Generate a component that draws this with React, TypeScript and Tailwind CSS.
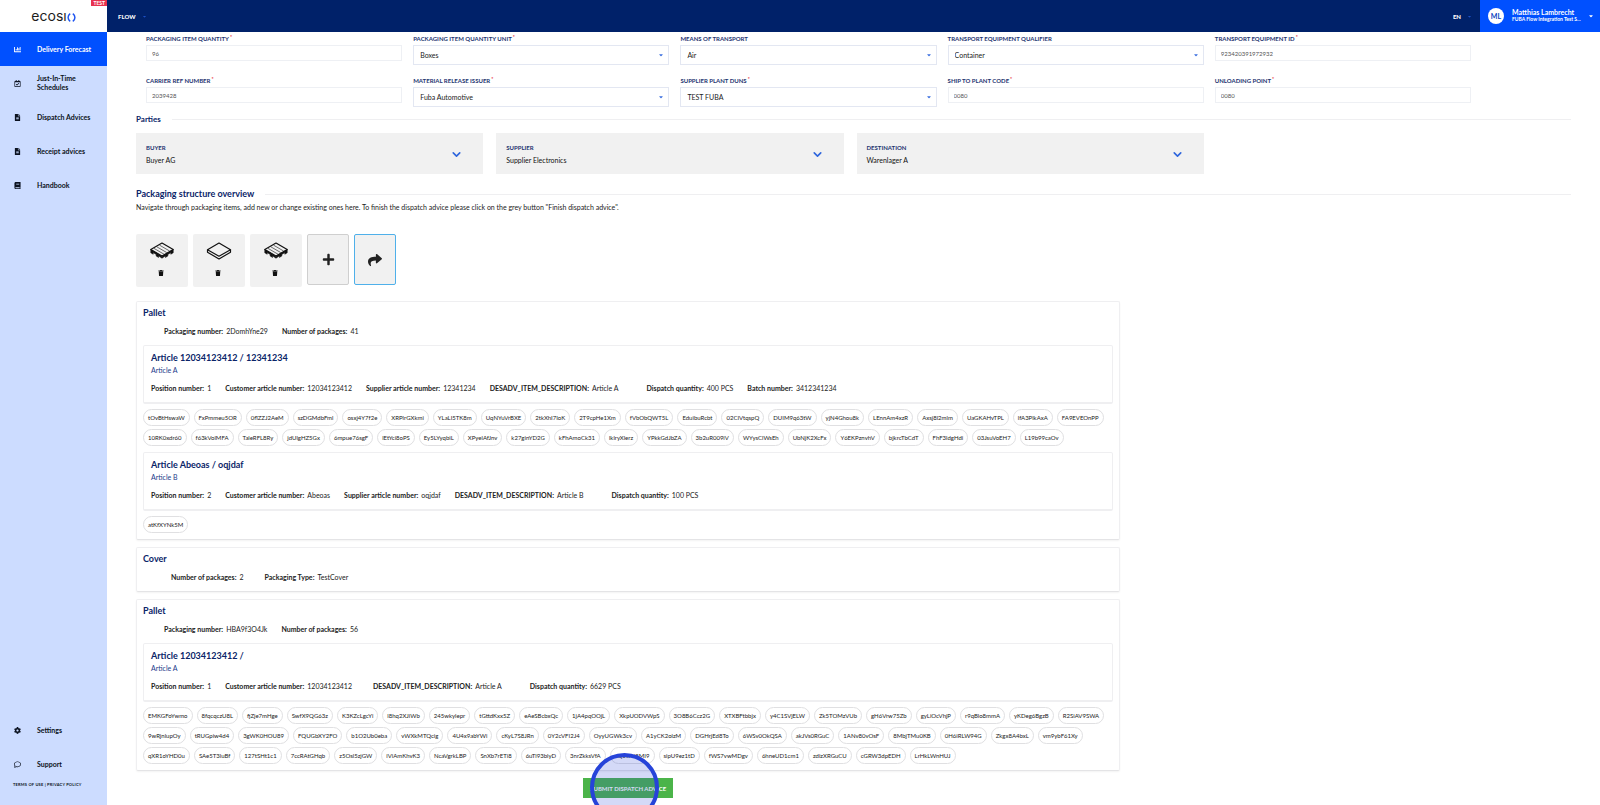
import React from 'react';
import {
  FaBook,
  FaCaretDown,
  FaChartBar,
  FaCog,
  FaFileAlt,
  FaPlus,
  FaRegCalendarCheck,
  FaRegComment,
  FaShare,
  FaTrash,
} from 'react-icons/fa';
import { ChevronDown } from 'lucide-react';

const navItems = [
  { label: 'Delivery Forecast', icon: FaChartBar, active: true },
  { label: 'Just-In-Time Schedules', icon: FaRegCalendarCheck },
  { label: 'Dispatch Advices', icon: FaFileAlt },
  { label: 'Receipt advices', icon: FaFileAlt },
  { label: 'Handbook', icon: FaBook },
];

const footerItems = [
  { label: 'Settings', icon: FaCog },
  { label: 'Support', icon: FaRegComment },
];

type Field = { id: string; label: string; value: string; required?: boolean; select?: boolean };

const fields: Field[] = [
  { id: 'item-quantity', label: 'Packaging item quantity', value: '96', required: true },
  { id: 'item-quantity-unit', label: 'Packaging item quantity unit', value: 'Boxes', required: true, select: true },
  { id: 'means-of-transport', label: 'Means of transport', value: 'Air', select: true },
  { id: 'equipment-qualifier', label: 'Transport equipment qualifier', value: 'Container', select: true },
  { id: 'equipment-id', label: 'Transport equipment ID', value: '923420391972932', required: true },
  { id: 'carrier-ref', label: 'Carrier ref number', value: '2039428', required: true },
  { id: 'release-issuer', label: 'Material release issuer', value: 'Fuba Automotive', required: true, select: true },
  { id: 'plant-duns', label: 'Supplier plant DUNS', value: 'TEST FUBA', required: true, select: true },
  { id: 'ship-to', label: 'Ship to plant code', value: '0080', required: true },
  { id: 'unloading-point', label: 'Unloading point', value: '0080', required: true },
];

const parties = [
  { role: 'Buyer', name: 'Buyer AG' },
  { role: 'Supplier', name: 'Supplier Electronics' },
  { role: 'Destination', name: 'Warenlager A' },
];

const serialsA =
  'tOvBtHswaW FxPmmeu5OR 0flZZJ2AeM szDGMdbFml osxj4Y7f2e XRPlrGXkmi YLaLI5TK8m UqNYuVrBXE 2tkXhI7IoK 2T9cpHe1Xm fVbObQWT5L EduibuRcbt 02CIVtqspQ DUIM9q63tW yjN4Ghou8k LEnnAm4xzR Axsj8l2mlm UaGKAHvTPL lfA3PlkAxA FA9EVEOnPP 10RK0xdr60 f63kVolMFA TaleRFL8Ry jdUlgHZ5Gx 6mpue76sgF lEtYci8oPS Ey5LYyqbiL XPyelAfJnv k27ginYD2G kFhAmoCk31 lklryXlerz YPkkGdJbZA 3b2uR009iV WYysClWsEh UbNjK2XcFx Y6EKPznvhV bjkrcTbCdT FhF3ldgHdi 03JsuVoEH7 L19b99caOv'.split(' ');

const serialsC =
  'EMKGFoYwmo 8fqcqczU8L fjZje7mHge SwfX9QG63z K3KZcLgcYi l8hq2XJiWb 245wkylepr tGttdKxx5Z eAeSBcbxQc 1jA4pqOOjL XkpUODVWpS 3O8B6Ccz2G XTXBFtbbjx y4C1SVjELW Zk5TOMzVUb gH6Vrw75Zb gyLiOcVhjP r9qBlo8mmA yKDeg6BgzB R2SiAV9SWA 9wRjnlupOy tRUGpiw4d4 3gWK0HOU89 FQUGbXY2FO b1O2Ub0eba vWXkMTQcig 4U4x9abYWi cKyL7S8JRn 0Y2cVFI2J4 OyyUGWk3cv A1yCK2olzM DGHrjEd8To 6WSv0OkQSA akJVs0RGuC 1ANv80vOsF 8MbjTMu0KB 0H6iRLW94G Zkgx8A4bxL vm9ybF61Xy qXR1oYHD0u SAe5T3luBf 127tSHt1c1 7ccRAtGHqb z5Osl5zjGW iViAmKhvK3 NcaVgrkLBP SnXb7rETi8 6uTl93blyD 3nrZkksVfA xQ3wni8MI9 sipU9ez1tD fWS7vwMDgv 6hneUD1cm1 zdizXRGuCU cGRW3dpEDH LrHkLWnHUJ'.split(' ');

const NavLink = ({ label, icon: Icon, active }: { label: string; icon: React.ElementType; active?: boolean }) => (
  <a
    href="#"
    className={`flex h-[34px] items-center pl-[14px] text-[7px] leading-[9px] font-bold ${
      active ? 'bg-[#0050ff] text-white' : 'text-[#0b1220]'
    }`}
  >
    <Icon size={7} className="shrink-0" />
    <span className="ml-4 w-[60px]">{label}</span>
  </a>
);

const Logo = () => (
  <a href="#" aria-label="ecosio" className="flex items-center text-[#1c1c1c]">
    <span className="font-[Inter] text-[14px] leading-4">ecosı</span>
    <svg width="9" height="9" viewBox="0 0 9 9" fill="none" stroke="#1f55f0" strokeWidth="1.5" className="mt-[2px]">
      <path d="M3.2 .7C.4 2.6 .4 6.4 3.2 8.3" />
      <path d="M5.8 .7C8.6 2.6 8.6 6.4 5.8 8.3" />
    </svg>
  </a>
);

const FormField = ({ id, label, value, required, select }: Field) => (
  <div>
    <label htmlFor={id} className="block h-[10px] text-[6px] leading-[7px] font-bold text-[#1d3470] uppercase">
      {label}
      {required && <span className="ml-px align-top text-[5px] leading-[5px] text-[#e8343f]">*</span>}
    </label>
    {select ? (
      <div className="relative">
        <select
          id={id}
          defaultValue={value}
          className="block h-5 w-full appearance-none border border-[#e3e7f2] bg-white pl-[6px] text-[7px] leading-[10px] text-[#222]"
        >
          <option>{value}</option>
        </select>
        <FaCaretDown size={6} className="pointer-events-none absolute top-[7px] right-[5px] text-[#3b6fe0]" />
      </div>
    ) : (
      <input
        id={id}
        defaultValue={value}
        className="block h-4 w-full border border-[#eef0f4] bg-white pl-[5px] text-[6px] leading-[8px] text-[#555]"
      />
    )}
  </div>
);

const SectionTitle = ({ children, large }: { children: React.ReactNode; large?: boolean }) => (
  <div className="flex items-center gap-[11px]">
    <h2 className={`font-bold text-[#0a2468] ${large ? 'text-[9px] leading-3' : 'text-[8px] leading-3'}`}>{children}</h2>
    <div className="h-px flex-1 bg-[#efeff1]" />
  </div>
);

const PalletIcon = () => (
  <svg width="26" height="20" viewBox="0 0 26 20" fill="none" stroke="#111" strokeWidth="1.2" strokeLinejoin="round">
    <path d="M13 2 24.2 8.6 13 15 1.8 8.6Z" />
    <path d="M5 7.4 15 13.2M7.8 5.8 17.8 11.6M10.6 4.2 20.6 10" strokeWidth=".6" />
    <path d="M1.8 8.6v3.2l2.4 1.4v-1.6l3 1.8v1.6l2.4 1.4v-1.6L13 17.2l3.4-2.4v1.6l2.4-1.4v-1.6l3-1.8v1.6l2.4-1.4V8.6L13 15.4Z" fill="#111" strokeWidth=".6" />
  </svg>
);

const CoverIcon = () => (
  <svg width="26" height="20" viewBox="0 0 26 20" fill="none" stroke="#111" strokeWidth="1.2" strokeLinejoin="round">
    <path d="M13 2 24.5 8.8 13 15.2 1.5 8.8Z" />
    <path d="M1.5 8.8v2.4L13 18l11.5-6.8V8.8" />
  </svg>
);

const PackagingTile = ({ children, name }: { children: React.ReactNode; name: string }) => (
  <div className="flex h-[53px] w-[52px] flex-col items-center rounded-xs bg-[#f1f1f1] pt-[7px]">
    {children}
    <button aria-label={`Delete ${name}`} className="mt-[9px] mr-[2px]">
      <FaTrash size={6} className="text-[#111]" />
    </button>
  </div>
);

// Entries are [label, value, extra class for the gap before the entry]
type Meta = [string, string, string?];

const MetaRow = ({ items, className = '' }: { items: Meta[]; className?: string }) => (
  <dl className={`flex text-[7px] leading-[10px] text-[#222] ${className}`}>
    {items.map(([label, value, gap]) => (
      <div key={label} className={`flex gap-[3px] ${gap ?? 'ml-[14px]'}`}>
        <dt className="font-bold">{label}:</dt>
        <dd>{value}</dd>
      </div>
    ))}
  </dl>
);

const PackageCard = ({ title, children }: { title: string; children: React.ReactNode }) => (
  <section className="mb-[7px] rounded-xs border border-[#efeff1] border-b-[#e4e4e6] px-[6px] pt-[5px] pb-[6px] shadow-xs">
    <h3 className="text-[9px] leading-3 font-bold text-[#0a2468]">{title}</h3>
    {children}
  </section>
);

const ArticleBox = ({ title, subtitle, meta }: { title: string; subtitle: string; meta: Meta[] }) => (
  <article className="rounded-xs border border-b-2 border-[#efeff1] px-[7px] pt-[5px] pb-[9px]">
    <h4 className="text-[9px] leading-[14px] font-bold text-[#0a2468]">{title}</h4>
    <p className="text-[7px] leading-[10px] text-[#1d3a8a]">{subtitle}</p>
    <MetaRow items={meta} className="mt-2" />
  </article>
);

const Chips = ({ items }: { items: string[] }) => (
  <ul className="mt-[5px] flex flex-wrap gap-x-1 gap-y-[3px]">
    {items.map((serial) => (
      <li key={serial} className="h-[17px] rounded-full border border-[#e0e0e2] px-1 text-[6px] leading-[15px] text-[#222]">
        {serial}
      </li>
    ))}
  </ul>
);

export default function App() {
  return (
    <div className="flex h-screen overflow-hidden bg-white font-[Lato,sans-serif] text-[#222]">
      <aside className="flex w-[107px] shrink-0 flex-col bg-[#ccdcff]">
        <div className="relative flex h-8 shrink-0 items-center justify-center bg-white">
          <Logo />
          <span className="absolute top-0 right-0 bg-[#e8324f] px-[2px] text-[5px] leading-[6px] font-bold text-white">TEST</span>
        </div>
        <nav className="flex flex-1 flex-col">
          {navItems.map((item) => (
            <NavLink key={item.label} {...item} />
          ))}
          <div className="mt-auto">
            {footerItems.map((item) => (
              <NavLink key={item.label} {...item} />
            ))}
          </div>
        </nav>
        <p className="h-6 pl-[13px] text-[4px] leading-[7px] font-bold tracking-wider text-[#0b1220] uppercase">
          <a href="#">Terms of use</a> | <a href="#">Privacy policy</a>
        </p>
      </aside>

      <div className="flex min-w-0 flex-1 flex-col">
        <header className="flex h-8 shrink-0 items-center bg-[#002169] text-white">
          <button className="ml-[11px] flex items-center gap-[6px] text-[6px] font-black">
            FLOW
            <FaCaretDown size={5} className="text-[#1c4fc4]" />
          </button>
          <button className="mr-2 ml-auto flex items-center gap-[6px] text-[6px] font-black">
            EN
            <FaCaretDown size={5} className="text-[#1c4fc4]" />
          </button>
          <button className="flex h-full w-[120px] items-center bg-[#0050ff] pl-2 text-left">
            <span className="flex size-4 items-center justify-center rounded-full bg-white text-[7px] font-bold text-[#0a3fc0]">ML</span>
            <span className="ml-2 flex-1 leading-[7px] font-bold">
              <span className="block text-[7px]">Matthias Lambrecht</span>
              <span className="block text-[5px]">FUBA Flow Integration Test S...</span>
            </span>
            <FaCaretDown size={6} className="mr-[6px]" />
          </button>
        </header>

        <main className="flex-1 overflow-hidden pt-[3px] pr-[29px] pl-[29px]">
          <form className="grid grid-cols-5 gap-x-[11px] gap-y-3 pr-[100px] pl-[10px]">
            {fields.map((field) => (
              <FormField key={field.id} {...field} />
            ))}
          </form>

          <div className="mt-[6px]">
            <SectionTitle>Parties</SectionTitle>
          </div>
          <div className="mt-2 grid grid-cols-4 gap-[13px] pr-[7px]">
            {parties.map((party) => (
              <button key={party.role} className="flex h-[41px] items-center justify-between bg-[#f1f1f1] pr-5 pl-[10px] text-left">
                <span>
                  <span className="block text-[6px] leading-3 font-bold text-[#1d3470] uppercase">{party.role}</span>
                  <span className="block text-[7px] leading-3 text-[#111]">{party.name}</span>
                </span>
                <ChevronDown size={13} strokeWidth={3} className="mt-[2px] text-[#2f66dd]" />
              </button>
            ))}
          </div>

          <div className="mt-[14px]">
            <SectionTitle large>Packaging structure overview</SectionTitle>
          </div>
          <p className="mt-[2px] text-[7px] leading-[10px]">
            Navigate through packaging items, add new or change existing ones here. To finish the dispatch advice please click on the grey
            button "Finish dispatch advice".
          </p>

          <div className="mt-[22px] flex items-start gap-[5px]">
            <PackagingTile name="pallet 1">
              <PalletIcon />
            </PackagingTile>
            <PackagingTile name="cover">
              <CoverIcon />
            </PackagingTile>
            <PackagingTile name="pallet 2">
              <PalletIcon />
            </PackagingTile>
            <button aria-label="Add item" className="flex h-[51px] w-[42px] items-center justify-center rounded-xs border border-[#cfcfcf] bg-[#f1f1f1]">
              <FaPlus size={13} />
            </button>
            <button aria-label="Finish dispatch advice" className="flex h-[51px] w-[42px] items-center justify-center rounded-xs border border-[#4fb0ea] bg-[#f1f1f1]">
              <FaShare size={14} />
            </button>
          </div>

          <div className="mt-[14px] w-[68.6%]">
            <PackageCard title="Pallet">
              <MetaRow
                className="mt-[7px] mb-[9px]"
                items={[
                  ['Packaging number', '2DomhYne29', 'ml-[21px]'],
                  ['Number of packages', '41'],
                ]}
              />
              <ArticleBox
                title="Article 12034123412 / 12341234"
                subtitle="Article A"
                meta={[
                  ['Position number', '1', 'ml-0'],
                  ['Customer article number', '12034123412'],
                  ['Supplier article number', '12341234'],
                  ['DESADV_ITEM_DESCRIPTION', 'Article A'],
                  ['Dispatch quantity', '400 PCS', 'ml-[28px]'],
                  ['Batch number', '3412341234'],
                ]}
              />
              <Chips items={serialsA} />
              <div className="mt-[6px]">
                <ArticleBox
                  title="Article Abeoas / oqjdaf"
                  subtitle="Article B"
                  meta={[
                    ['Position number', '2', 'ml-0'],
                    ['Customer article number', 'Abeoas'],
                    ['Supplier article number', 'oqjdaf'],
                    ['DESADV_ITEM_DESCRIPTION', 'Article B'],
                    ['Dispatch quantity', '100 PCS', 'ml-[28px]'],
                  ]}
                />
              </div>
              <Chips items={['atKfXYNk5M']} />
            </PackageCard>

            <PackageCard title="Cover">
              <MetaRow
                className="mt-[7px] mb-[3px]"
                items={[
                  ['Number of packages', '2', 'ml-7'],
                  ['Packaging Type', 'TestCover', 'ml-[21px]'],
                ]}
              />
            </PackageCard>

            <PackageCard title="Pallet">
              <MetaRow
                className="mt-[7px] mb-[9px]"
                items={[
                  ['Packaging number', 'HBA9f3O4Jk', 'ml-[21px]'],
                  ['Number of packages', '56'],
                ]}
              />
              <ArticleBox
                title="Article 12034123412 /"
                subtitle="Article A"
                meta={[
                  ['Position number', '1', 'ml-0'],
                  ['Customer article number', '12034123412'],
                  ['DESADV_ITEM_DESCRIPTION', 'Article A', 'ml-[21px]'],
                  ['Dispatch quantity', '6629 PCS', 'ml-[28px]'],
                ]}
              />
              <Chips items={serialsC} />
            </PackageCard>

            <div className="relative mx-auto w-fit">
              <button className="block h-5 bg-[#4bb449] px-[7px] text-[6px] font-bold text-white uppercase">
                Submit dispatch advice
              </button>
              {/* click marker over the button */}
              <div className="pointer-events-none absolute -top-[25px] left-[7px] size-[69px] rounded-full border-4 border-[#2643d9] bg-[#2643d9]/20" />
            </div>
          </div>
        </main>
      </div>
    </div>
  );
}
